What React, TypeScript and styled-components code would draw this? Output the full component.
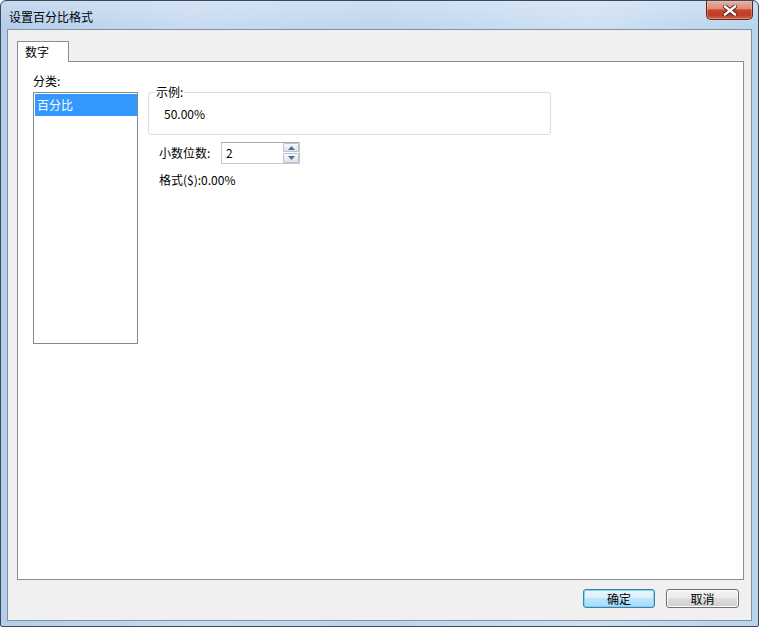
import React from 'react';
import styled, { createGlobalStyle } from 'styled-components';

const GlobalStyle = createGlobalStyle`
  html, body { margin: 0; padding: 0; }
  body {
    font-family: "Noto Sans CJK SC", "Liberation Sans", sans-serif;
    font-size: 12px;
    color: #000;
  }
  * { box-sizing: border-box; }
`;

const Window = styled.div`
  width: 759px;
  height: 627px;
  display: flex;
  flex-direction: column;
  border: 1px solid #3d4957;
  border-radius: 6px 6px 2px 2px;
  overflow: hidden;
  background:
    linear-gradient(180deg, rgba(255, 255, 255, 0.25) 0px, rgba(255, 255, 255, 0) 28px),
    linear-gradient(90deg, #b3cdea 0%, #c7dbf1 25%, #bed5ee 50%, #cde0f4 78%, #b9d2ed 100%);
`;

const TitleBar = styled.div`
  height: 28px;
  flex: none;
  display: flex;
  align-items: flex-start;
  justify-content: space-between;
`;

const Title = styled.div`
  padding: 9px 0 0 8px;
  line-height: 14px;
  font-size: 12px;
  color: #000;
`;

const CloseButton = styled.div`
  width: 47px;
  height: 19px;
  margin-right: 5px;
  border: 1px solid #5a2a22;
  border-top: none;
  border-radius: 0 0 5px 5px;
  background: linear-gradient(180deg, #e8b0a3 0%, #dd8d78 42%, #c8462c 50%, #c03a20 78%, #d46a4c 100%);
  display: flex;
  align-items: center;
  justify-content: center;
  box-shadow: inset 0 0 0 1px rgba(255, 200, 190, 0.35);
`;

const Client = styled.div`
  flex: 1;
  margin: 0 6px 5px 6px;
  border: 1px solid #85919f;
  background: #f0f0f0;
  display: flex;
  flex-direction: column;
  padding: 11px 7px 0 9px;
`;

const TabStrip = styled.div`
  display: flex;
  flex: none;
`;

const Tab = styled.div`
  width: 52px;
  height: 21px;
  border: 1px solid #898c95;
  border-bottom: none;
  background: #fff;
  padding: 3px 0 0 7px;
  line-height: 14px;
  margin-bottom: -1px;
  position: relative;
  z-index: 1;
`;

const Panel = styled.div`
  flex: 1;
  border: 1px solid #898c95;
  background: #fff;
  padding: 12px 0 0 15px;
  display: grid;
  grid-template-columns: 105px 403px;
  grid-template-rows: 14px 252px;
  column-gap: 10px;
  row-gap: 4px;
  align-content: start;
`;

const FieldLabel = styled.div`
  line-height: 14px;
`;

const ListBox = styled.div`
  border: 1px solid #828790;
  padding: 1px 0 1px 1px;
  background: #fff;
`;

const ListItem = styled.div<{ $selected?: boolean }>`
  height: 22px;
  line-height: 22px;
  padding-left: 2px;
  background: ${(p) => (p.$selected ? '#3399ff' : 'transparent')};
  color: ${(p) => (p.$selected ? '#fff' : '#000')};
`;

const RightColumn = styled.div`
  grid-column: 2;
  grid-row: 1 / 3;
  padding-top: 11px;
  display: flex;
  flex-direction: column;
`;

const GroupBox = styled.fieldset`
  width: 403px;
  margin: 0;
  padding: 0 8px 0 6px;
  border: 1px solid #d5dfe5;
  border-radius: 3px;
`;

const GroupLegend = styled.legend`
  padding: 0 1px;
  line-height: 14px;
  font-size: 12px;
`;

const Sample = styled.div`
  margin: 8px 0 13px 9px;
  line-height: 14px;
`;

const SpinRow = styled.div`
  margin-top: 7px;
  height: 22px;
  display: flex;
  align-items: center;
  padding-left: 11px;
`;

const SpinLabel = styled.div`
  width: 62px;
  line-height: 14px;
`;

const SpinBox = styled.div`
  width: 79px;
  height: 22px;
  border: 1px solid #c3c8cf;
  border-top-color: #abadb3;
  background: #fff;
  display: flex;
  align-items: stretch;
`;

const SpinValue = styled.div`
  flex: 1;
  padding-left: 4px;
  line-height: 20px;
`;

const SpinButtons = styled.div`
  width: 16px;
  display: flex;
  flex-direction: column;
  gap: 1px;
  padding: 0 0 0 0;
`;

const SpinButton = styled.div<{ $h: number }>`
  height: ${(p) => p.$h}px;
  border: 1px solid #b9c2cf;
  border-radius: 1px;
  background: linear-gradient(180deg, #f6f8fb 0%, #eaeef3 50%, #dfe5ec 100%);
  display: flex;
  align-items: center;
  justify-content: center;
`;

const FormatLine = styled.div`
  margin-top: 9px;
  padding-left: 11px;
  line-height: 14px;
`;

const ButtonRow = styled.div`
  flex: none;
  height: 40px;
  display: flex;
  justify-content: flex-end;
  align-items: flex-start;
  gap: 11px;
  padding: 9px 5px 0 0;
`;

const DialogButton = styled.button<{ $primary?: boolean; $w: number }>`
  width: ${(p) => p.$w}px;
  height: 19px;
  padding: 0;
  margin: 0;
  font-family: "Noto Sans CJK SC", "Liberation Sans", sans-serif;
  font-size: 12px;
  line-height: 15px;
  color: #000;
  border-radius: 3px;
  border: 1px solid ${(p) => (p.$primary ? '#3c7fb1' : '#707070')};
  background: ${(p) =>
    p.$primary
      ? 'linear-gradient(180deg, #eaf6fd 0%, #d9f0fc 50%, #bee6fd 50%, #a7d9f5 100%)'
      : 'linear-gradient(180deg, #f2f2f2 0%, #ebebeb 50%, #dddddd 50%, #cfcfcf 100%)'};
  box-shadow: ${(p) =>
    p.$primary ? 'inset 0 0 0 1px #7fd3f7' : 'inset 0 0 0 1px #fcfcfc'};
`;

const CloseGlyph = () => (
  <svg width="14" height="11" viewBox="0 0 14 11">
    <path d="M2 1.5 L12 9.5 M12 1.5 L2 9.5" stroke="#3b1a14" strokeWidth="4.2" strokeLinecap="square" />
    <path d="M2 1.5 L12 9.5 M12 1.5 L2 9.5" stroke="#ffffff" strokeWidth="2.4" strokeLinecap="square" />
  </svg>
);

const Arrow = ({ up }: { up: boolean }) => (
  <svg width="7" height="4" viewBox="0 0 7 4">
    <path d={up ? 'M0 4 L3.5 0 L7 4 Z' : 'M0 0 L7 0 L3.5 4 Z'} fill="#4d6a95" />
  </svg>
);

export default function App() {
  return (
    <>
      <GlobalStyle />
      <Window>
        <TitleBar>
          <Title>设置百分比格式</Title>
          <CloseButton>
            <CloseGlyph />
          </CloseButton>
        </TitleBar>
        <Client>
          <TabStrip>
            <Tab>数字</Tab>
          </TabStrip>
          <Panel>
            <FieldLabel>分类:</FieldLabel>
            <RightColumn>
              <GroupBox>
                <GroupLegend>示例:</GroupLegend>
                <Sample>50.00%</Sample>
              </GroupBox>
              <SpinRow>
                <SpinLabel>小数位数:</SpinLabel>
                <SpinBox>
                  <SpinValue>2</SpinValue>
                  <SpinButtons>
                    <SpinButton $h={9}>
                      <Arrow up />
                    </SpinButton>
                    <SpinButton $h={10}>
                      <Arrow up={false} />
                    </SpinButton>
                  </SpinButtons>
                </SpinBox>
              </SpinRow>
              <FormatLine>格式($):0.00%</FormatLine>
            </RightColumn>
            <ListBox>
              <ListItem $selected>百分比</ListItem>
            </ListBox>
          </Panel>
          <ButtonRow>
            <DialogButton $primary $w={72}>确定</DialogButton>
            <DialogButton $w={73}>取消</DialogButton>
          </ButtonRow>
        </Client>
      </Window>
    </>
  );
}
